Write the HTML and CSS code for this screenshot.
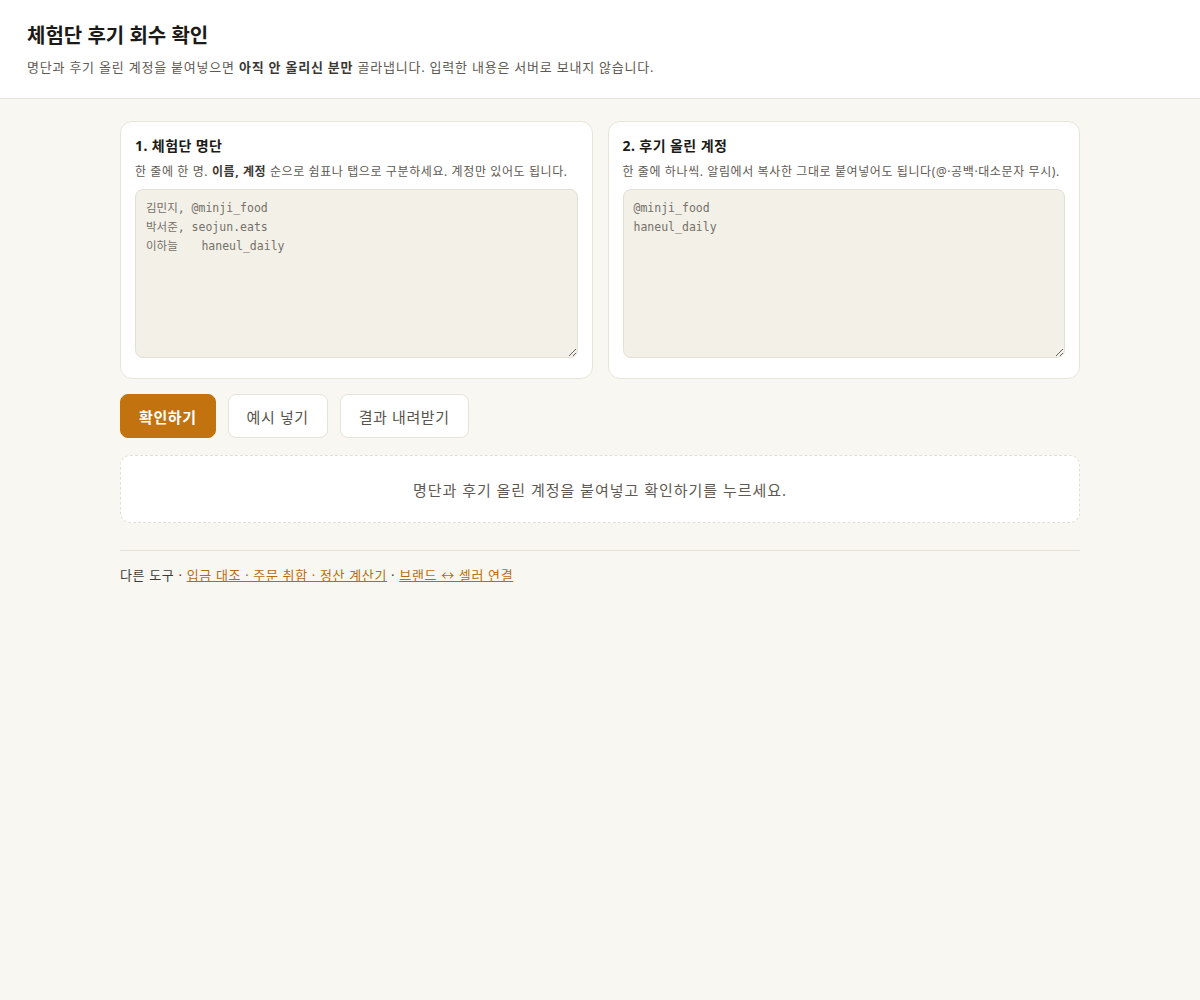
FILE: index.html
```html
<!DOCTYPE html>
<html lang="ko">
<head>
<meta charset="utf-8">
<title>체험단 후기 회수 확인</title>
<link rel="stylesheet" href="styles.css">
</head>
<body>
<header class="top">
  <h1 class="title">체험단 후기 회수 확인</h1>
  <p class="lead">명단과 후기 올린 계정을 붙여넣으면 <b>아직 안 올리신 분만</b> 골라냅니다. 입력한 내용은 서버로 보내지 않습니다.</p>
</header>
<main class="wrap">
  <div class="cards">
    <section class="card">
      <h2 class="card-title">1. 체험단 명단</h2>
      <p class="card-desc">한 줄에 한 명. <b>이름, 계정</b> 순으로 쉼표나 탭으로 구분하세요. 계정만 있어도 됩니다.</p>
      <textarea class="field" placeholder="김민지, @minji_food
박서준, seojun.eats
이하늘	haneul_daily"></textarea>
    </section>
    <section class="card">
      <h2 class="card-title">2. 후기 올린 계정</h2>
      <p class="card-desc">한 줄에 하나씩. 알림에서 복사한 그대로 붙여넣어도 됩니다(@·공백·대소문자 무시).</p>
      <textarea class="field" placeholder="@minji_food
haneul_daily"></textarea>
    </section>
  </div>
  <div class="actions">
    <button class="btn btn-primary">확인하기</button>
    <button class="btn">예시 넣기</button>
    <button class="btn">결과 내려받기</button>
  </div>
  <div class="result">명단과 후기 올린 계정을 붙여넣고 확인하기를 누르세요.</div>
  <footer class="foot">다른 도구 · <a href="#">입금 대조 · 주문 취합 · 정산 계산기</a> · <a href="#">브랜드 ↔ 셀러 연결</a></footer>
</main>
</body>
</html>
```
FILE: styles.css
```css
* { box-sizing: border-box; }
html, body { margin: 0; padding: 0; }
body {
  background: #f9f7f1;
  font-family: "Noto Sans", "Noto Sans CJK KR", sans-serif;
  color: #1f1d1a;
}
.top {
  background: #ffffff;
  border-bottom: 1px solid #e6e2d8;
  padding: 22px 27px 22px;
}
.title {
  margin: 0;
  font-size: 20px;
  font-weight: 700;
  line-height: 28px;
  color: #1b1a17;
}
.lead {
  margin: 8px 0 0;
  font-size: 13px;
  line-height: 18px;
  letter-spacing: 0.06em;
  color: #5e5a53;
}
.lead b { color: #3a3733; }
.wrap {
  width: 960px;
  margin: 0 auto;
  padding-top: 22px;
}
.cards {
  display: grid;
  grid-template-columns: 1fr 1fr;
  gap: 15px;
}
.card {
  background: #ffffff;
  border: 1px solid #e8e4da;
  border-radius: 12px;
  padding: 14px 14px 20px;
}
.card-title {
  margin: 0;
  font-size: 14px;
  font-weight: 700;
  line-height: 20px;
  letter-spacing: 0.03em;
  color: #1b1a17;
}
.card-desc {
  margin: 7px 0 8px;
  font-size: 12px;
  line-height: 18px;
  letter-spacing: 0.05em;
  color: #5e5a53;
}
.card-desc b { color: #3a3733; }
.field {
  display: block;
  width: 100%;
  height: 169px;
  resize: vertical;
  background: #f3f0e8;
  border: 1px solid #e3dfd4;
  border-radius: 8px;
  padding: 9px 10px;
  font-family: "DejaVu Sans Mono", "Noto Sans CJK KR", monospace;
  font-size: 11.5px;
  line-height: 19px;
  color: #333;
  tab-size: 8;
}
.field::placeholder { color: #75716a; }
.actions {
  display: flex;
  gap: 12px;
  margin-top: 15px;
}
.btn {
  height: 44px;
  padding: 0 18px;
  border: 1px solid #e6e2d8;
  border-radius: 8px;
  background: #ffffff;
  font-family: "Noto Sans", "Noto Sans CJK KR", sans-serif;
  font-size: 15px;
  letter-spacing: 0.04em;
  color: #57534c;
  cursor: pointer;
}
.btn-primary {
  background: #c2720e;
  border-color: #c2720e;
  color: #ffffff;
  font-weight: 700;
}
.result {
  margin-top: 17px;
  background: #ffffff;
  border: 1px dashed #e2ded3;
  border-radius: 10px;
  height: 68px;
  display: flex;
  align-items: center;
  justify-content: center;
  font-size: 15px;
  letter-spacing: 0.065em;
  color: #5e5a53;
}
.foot {
  margin-top: 27px;
  border-top: 1px solid #e4e0d6;
  padding-top: 15px;
  font-size: 13px;
  line-height: 18px;
  letter-spacing: 0.05em;
  color: #3f3c37;
}
.foot a { color: #b96c0c; }
```
